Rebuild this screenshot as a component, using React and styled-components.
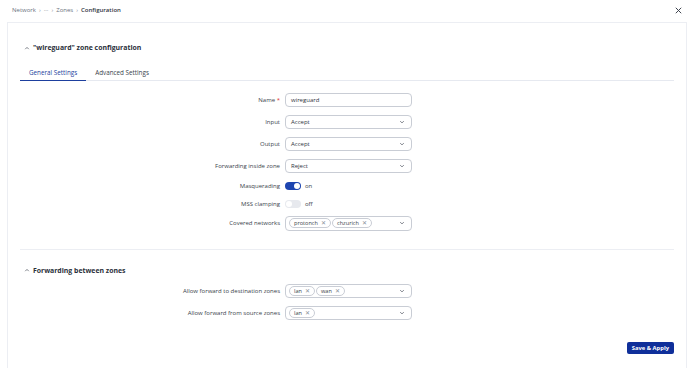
import React from "react";
import styled, { createGlobalStyle } from "styled-components";

const GlobalStyle = createGlobalStyle`
  html, body {
    margin: 0;
    padding: 0;
    background: #ffffff;
    overflow: hidden;
  }
  body {
    font-family: "Open Sans", "Noto Sans", sans-serif;
    color: #2f3440;
  }
`;

const Page = styled.div`
  width: 690px;
  height: 368px;
  display: flex;
  flex-direction: column;
`;

const TopBar = styled.div`
  height: 22px;
  display: flex;
  align-items: center;
  justify-content: space-between;
  padding: 0 8px 2px 12px;
  box-sizing: border-box;
`;

const Crumbs = styled.div`
  display: flex;
  align-items: center;
  gap: 3px;
  font-size: 6px;
  color: #6b7280;
`;

const CrumbCurrent = styled.span`
  color: #2f3440;
  font-weight: 600;
`;

const Sep = styled.span`
  font-size: 6px;
  color: #8a909c;
`;

const CloseBtn = styled.div`
  width: 8px;
  height: 8px;
  display: flex;
  align-items: center;
  justify-content: center;
`;

const Card = styled.div`
  margin: 0 3px 0 7px;
  border: 1px solid #eceef3;
  border-bottom: none;
  flex: 1;
  padding: 0 12px;
  box-sizing: border-box;
`;

const SectionHead = styled.div`
  display: flex;
  align-items: center;
  gap: 3px;
  height: ${(p) => p.$h}px;
  padding: ${(p) => p.$top}px 0 0 4px;
  box-sizing: border-box;
  font-size: 6.9px;
  font-weight: 700;
  color: #2a2f3a;
`;

const HeadInner = styled.div`
  display: flex;
  align-items: center;
  gap: 3px;
  height: ${(p) => p.$h}px;
`;

const Tabs = styled.div`
  display: flex;
  height: 16px;
  border-bottom: 1px solid #e6e9f0;
`;

const Tab = styled.div`
  padding: 0 9px;
  display: flex;
  align-items: center;
  font-size: 6.3px;
  color: ${(p) => (p.$active ? "#1d3f9e" : "#3a3f4b")};
  border-bottom: ${(p) => (p.$active ? "1.5px solid #1d3f9e" : "none")};
  margin-bottom: -1px;
`;

const Form = styled.div`
  display: flex;
  flex-direction: column;
  padding-top: ${(p) => p.$top}px;
`;

const Row = styled.div`
  display: grid;
  grid-template-columns: 260px 127px;
  column-gap: 5px;
  align-items: center;
  height: ${(p) => p.$h || 22}px;
`;

const Label = styled.div`
  text-align: right;
  font-size: 6px;
  color: #3a3f4b;
`;

const Req = styled.span`
  color: #e03131;
`;

const Box = styled.div`
  height: ${(p) => p.$h || 14}px;
  border: 1px solid #c9cdd5;
  border-radius: 4px;
  box-sizing: border-box;
  display: flex;
  align-items: center;
  padding: 0 6px 0 5px;
  font-size: 6px;
  color: #2f3440;
`;

const BoxText = styled.span`
  flex: 1;
`;

const Chips = styled.div`
  flex: 1;
  display: flex;
  gap: 1px;
  margin-left: -2px;
`;

const Chip = styled.span`
  display: inline-flex;
  align-items: center;
  gap: 3px;
  height: 10px;
  padding: 0 4px;
  border: 1px solid #c9cdd5;
  border-radius: 5px;
  box-sizing: border-box;
  font-size: 5.6px;
  color: #3a3f4b;
`;

const ChipX = styled.span`
  font-size: 5.5px;
  color: #8a909c;
`;

const SwitchRow = styled.div`
  display: flex;
  align-items: center;
  gap: 4px;
  height: 10px;
  font-size: 6px;
  color: #3a3f4b;
`;

const Track = styled.span`
  position: relative;
  width: 16px;
  height: 8px;
  border-radius: 4px;
  background: ${(p) => (p.$on ? "#1d45b0" : "#e7e9ee")};
`;

const Knob = styled.span`
  position: absolute;
  top: 1px;
  left: ${(p) => (p.$on ? "9px" : "1px")};
  width: 6px;
  height: 6px;
  border-radius: 50%;
  background: #ffffff;
`;

const Divider = styled.div`
  height: 1px;
  background: #eceef3;
  margin-top: 15px;
`;

const Footer = styled.div`
  display: flex;
  justify-content: flex-end;
  padding-top: 18px;
`;

const SaveButton = styled.button`
  height: 12px;
  padding: 0 5px;
  border: none;
  border-radius: 2px;
  background: #0f2f9a;
  color: #ffffff;
  font-family: inherit;
  font-size: 5.8px;
  font-weight: 700;
`;

const Chevron = ({ dir = "down", size = 6, color = "#4a4f5b" }) => (
  <svg width={size} height={size} viewBox="0 0 10 10" fill="none">
    <path
      d={dir === "up" ? "M2.5 6.5 L5 4 L7.5 6.5" : "M2.5 4 L5 6.5 L7.5 4"}
      stroke={color}
      strokeWidth="1.2"
      strokeLinecap="round"
      strokeLinejoin="round"
    />
  </svg>
);

const Select = ({ value }) => (
  <Box>
    <BoxText>{value}</BoxText>
    <Chevron />
  </Box>
);

const MultiSelect = ({ items, h = 15 }) => (
  <Box $h={h}>
    <Chips>
      {items.map((it) => (
        <Chip key={it}>
          {it}
          <ChipX>✕</ChipX>
        </Chip>
      ))}
    </Chips>
    <Chevron />
  </Box>
);

const Switch = ({ on }) => (
  <SwitchRow>
    <Track $on={on}>
      <Knob $on={on} />
    </Track>
    {on ? "on" : "off"}
  </SwitchRow>
);

export default function App() {
  return (
    <Page>
      <GlobalStyle />
      <TopBar>
        <Crumbs>
          <span>Network</span>
          <Sep>›</Sep>
          <span>···</span>
          <Sep>›</Sep>
          <span>Zones</span>
          <Sep>›</Sep>
          <CrumbCurrent>Configuration</CrumbCurrent>
        </Crumbs>
        <CloseBtn>
          <svg width="7" height="7" viewBox="0 0 10 10">
            <path d="M1.5 1.5 L8.5 8.5 M8.5 1.5 L1.5 8.5" stroke="#3a3f4b" strokeWidth="1.4" strokeLinecap="round" />
          </svg>
        </CloseBtn>
      </TopBar>
      <Card>
        <SectionHead $h={41} $top={8}>
          <HeadInner $h={33}>
            <Chevron dir="up" />
            "wireguard" zone configuration
          </HeadInner>
        </SectionHead>
        <Tabs>
          <Tab $active>General Settings</Tab>
          <Tab>Advanced Settings</Tab>
        </Tabs>
        <Form $top={8}>
          <Row>
            <Label>
              Name <Req>*</Req>
            </Label>
            <Box>wireguard</Box>
          </Row>
          <Row>
            <Label>Input</Label>
            <Select value="Accept" />
          </Row>
          <Row>
            <Label>Output</Label>
            <Select value="Accept" />
          </Row>
          <Row>
            <Label>Forwarding inside zone</Label>
            <Select value="Reject" />
          </Row>
          <Row $h={18}>
            <Label>Masquerading</Label>
            <Switch on />
          </Row>
          <Row $h={17}>
            <Label>MSS clamping</Label>
            <Switch />
          </Row>
          <Row>
            <Label>Covered networks</Label>
            <MultiSelect items={["protonch", "chzurich"]} />
          </Row>
        </Form>
        <Divider />
        <SectionHead $h={30} $top={10}>
          <HeadInner $h={20}>
            <Chevron dir="up" />
            Forwarding between zones
          </HeadInner>
        </SectionHead>
        <Form $top={0}>
          <Row>
            <Label>Allow forward to destination zones</Label>
            <MultiSelect items={["lan", "wan"]} h={14} />
          </Row>
          <Row>
            <Label>Allow forward from source zones</Label>
            <MultiSelect items={["lan"]} h={14} />
          </Row>
        </Form>
        <Footer>
          <SaveButton>Save &amp; Apply</SaveButton>
        </Footer>
      </Card>
    </Page>
  );
}
